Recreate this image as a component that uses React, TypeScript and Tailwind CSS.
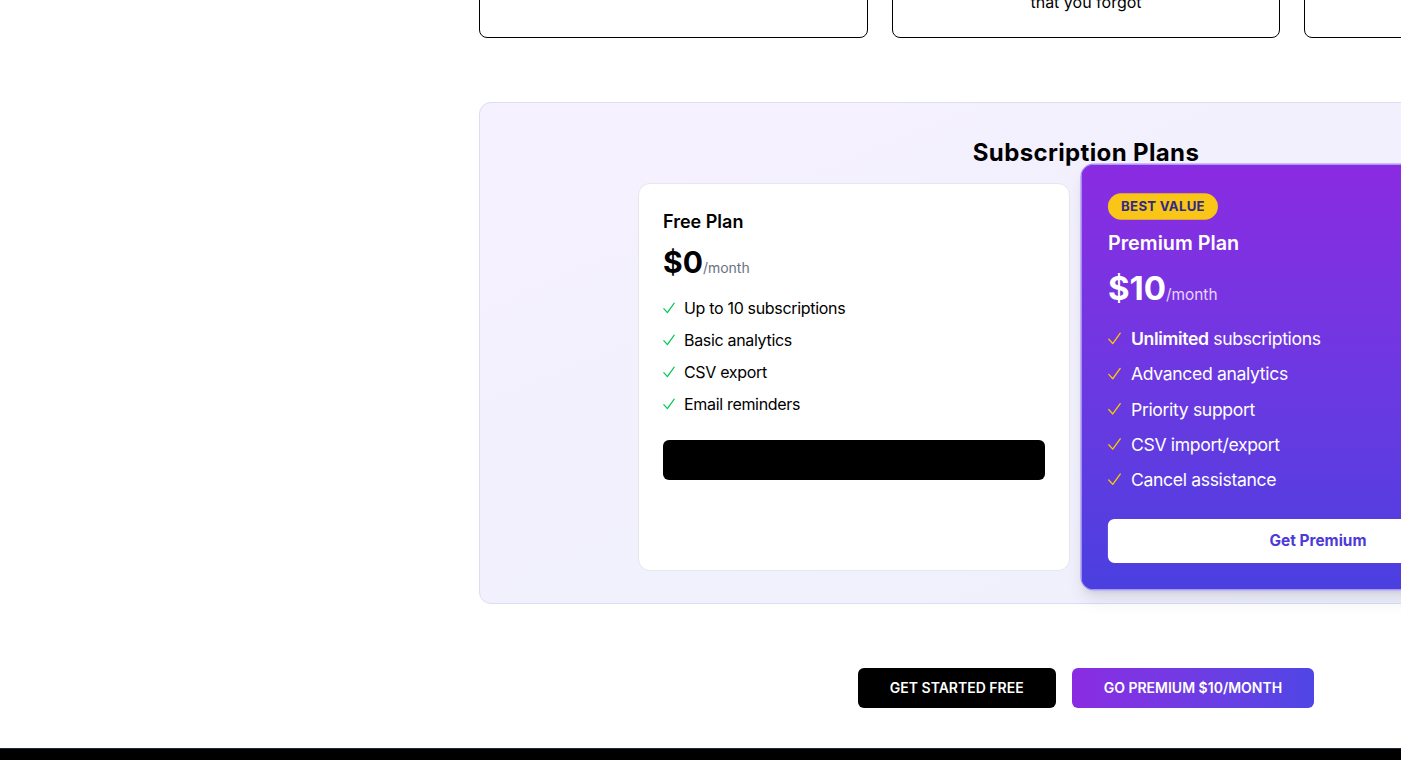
function Check({ tone }: { tone: string }) {
  return (
    <svg viewBox="0 0 12 12" className={`mr-[9px] h-3 w-3 shrink-0 ${tone}`} fill="none">
      <path d="M0.8 6.6 L4.4 10.6 L11.2 1.2" stroke="currentColor" strokeWidth="1.2" strokeLinecap="round" strokeLinejoin="round" />
    </svg>
  );
}

function TopCards() {
  return (
    <div className="h-[38px] overflow-hidden flex items-end">
      <div className="grid grid-cols-3 gap-6 w-full">
        <div className="border border-black rounded-lg bg-white px-6 pt-6 pb-[23px] text-center leading-6">
          <p className="font-semibold">Track everything</p>
          <p>All your plans in one place</p>
        </div>
        <div className="border border-black rounded-lg bg-white px-6 pt-6 pb-[23px] text-center leading-6">
          <p className="font-semibold">Save money</p>
          <p>Spot the charges</p>
          <p>that you forgot</p>
        </div>
        <div className="border border-black rounded-lg bg-white px-6 pt-6 pb-[23px] text-center leading-6">
          <p className="font-semibold">Never miss a renewal</p>
          <p>Get reminded in time</p>
        </div>
      </div>
    </div>
  );
}

function FreePlan() {
  const items = ["Up to 10 subscriptions", "Basic analytics", "CSV export", "Email reminders"];
  return (
    <div className="bg-white rounded-xl border border-gray-200 p-6">
      <h3 className="text-lg font-semibold leading-7 mb-2">Free Plan</h3>
      <div className="flex items-baseline mb-4">
        <span className="text-3xl font-bold leading-9">$0</span>
        <span className="text-sm text-gray-500">/month</span>
      </div>
      <ul className="space-y-2 tracking-[-0.02em]">
        {items.map((t) => (
          <li key={t} className="flex items-center leading-6">
            <Check tone="text-green-500" />
            {t}
          </li>
        ))}
      </ul>
      <button className="mt-6 w-full h-10 rounded-md bg-black text-black font-semibold">
        Get Started
      </button>
    </div>
  );
}

function PremiumPlan() {
  const items = ["Advanced analytics", "Priority support", "CSV import/export", "Cancel assistance"];
  return (
    <div className="relative z-10 scale-110 rounded-xl border border-[#9d8cf0] bg-gradient-to-b from-[#8a2be2] to-[#4a3fe0] p-6 text-white shadow-lg">
      <span className="inline-block rounded-full bg-[#f9c516] px-3 py-1 text-xs leading-4 font-bold tracking-[0.02em] text-[#2f2b86] mb-2">
        BEST VALUE
      </span>
      <h3 className="text-lg font-semibold leading-7 mb-2">Premium Plan</h3>
      <div className="flex items-baseline mb-4">
        <span className="text-3xl font-bold leading-9">$10</span>
        <span className="text-sm text-purple-200">/month</span>
      </div>
      <ul className="space-y-2 tracking-[-0.02em]">
        <li className="flex items-center leading-6">
          <Check tone="text-yellow-400" />
          <span>
            <b className="font-semibold">Unlimited</b> subscriptions
          </span>
        </li>
        {items.map((t) => (
          <li key={t} className="flex items-center leading-6">
            <Check tone="text-yellow-400" />
            {t}
          </li>
        ))}
      </ul>
      <button className="mt-6 w-full h-10 rounded-md bg-white text-[#4c3bd9] text-sm font-bold">
        Get Premium
      </button>
    </div>
  );
}

export default function App() {
  return (
    <div className="w-full overflow-hidden bg-white text-black font-['Inter',sans-serif]">
      <div className="flex">
        <div className="w-[479px] shrink-0" />
        <main className="w-[1214px] shrink-0">
          <TopCards />

          <section className="mt-16 rounded-xl border border-[#dcdcf3] bg-gradient-to-br from-[#f6f1fe] to-[#eef0fd] p-8">
            <h2 className="text-2xl leading-8 font-bold tracking-[0.015em] text-center mt-0.5 mb-3.5">
              Subscription Plans
            </h2>
            <div className="grid grid-cols-2 gap-8 max-w-4xl mx-auto">
              <FreePlan />
              <PremiumPlan />
            </div>
          </section>

          <div className="flex justify-center gap-4 mt-16 mb-10">
            <button className="h-10 px-8 rounded-md bg-black text-white text-sm font-semibold">
              GET STARTED FREE
            </button>
            <button className="h-10 px-8 rounded-md bg-gradient-to-r from-[#8a2be2] to-[#4f46e5] text-white text-sm font-semibold">
              GO PREMIUM $10/MONTH
            </button>
          </div>
        </main>
      </div>
      <footer className="h-24 bg-black border-t border-gray-800" />
    </div>
  );
}
